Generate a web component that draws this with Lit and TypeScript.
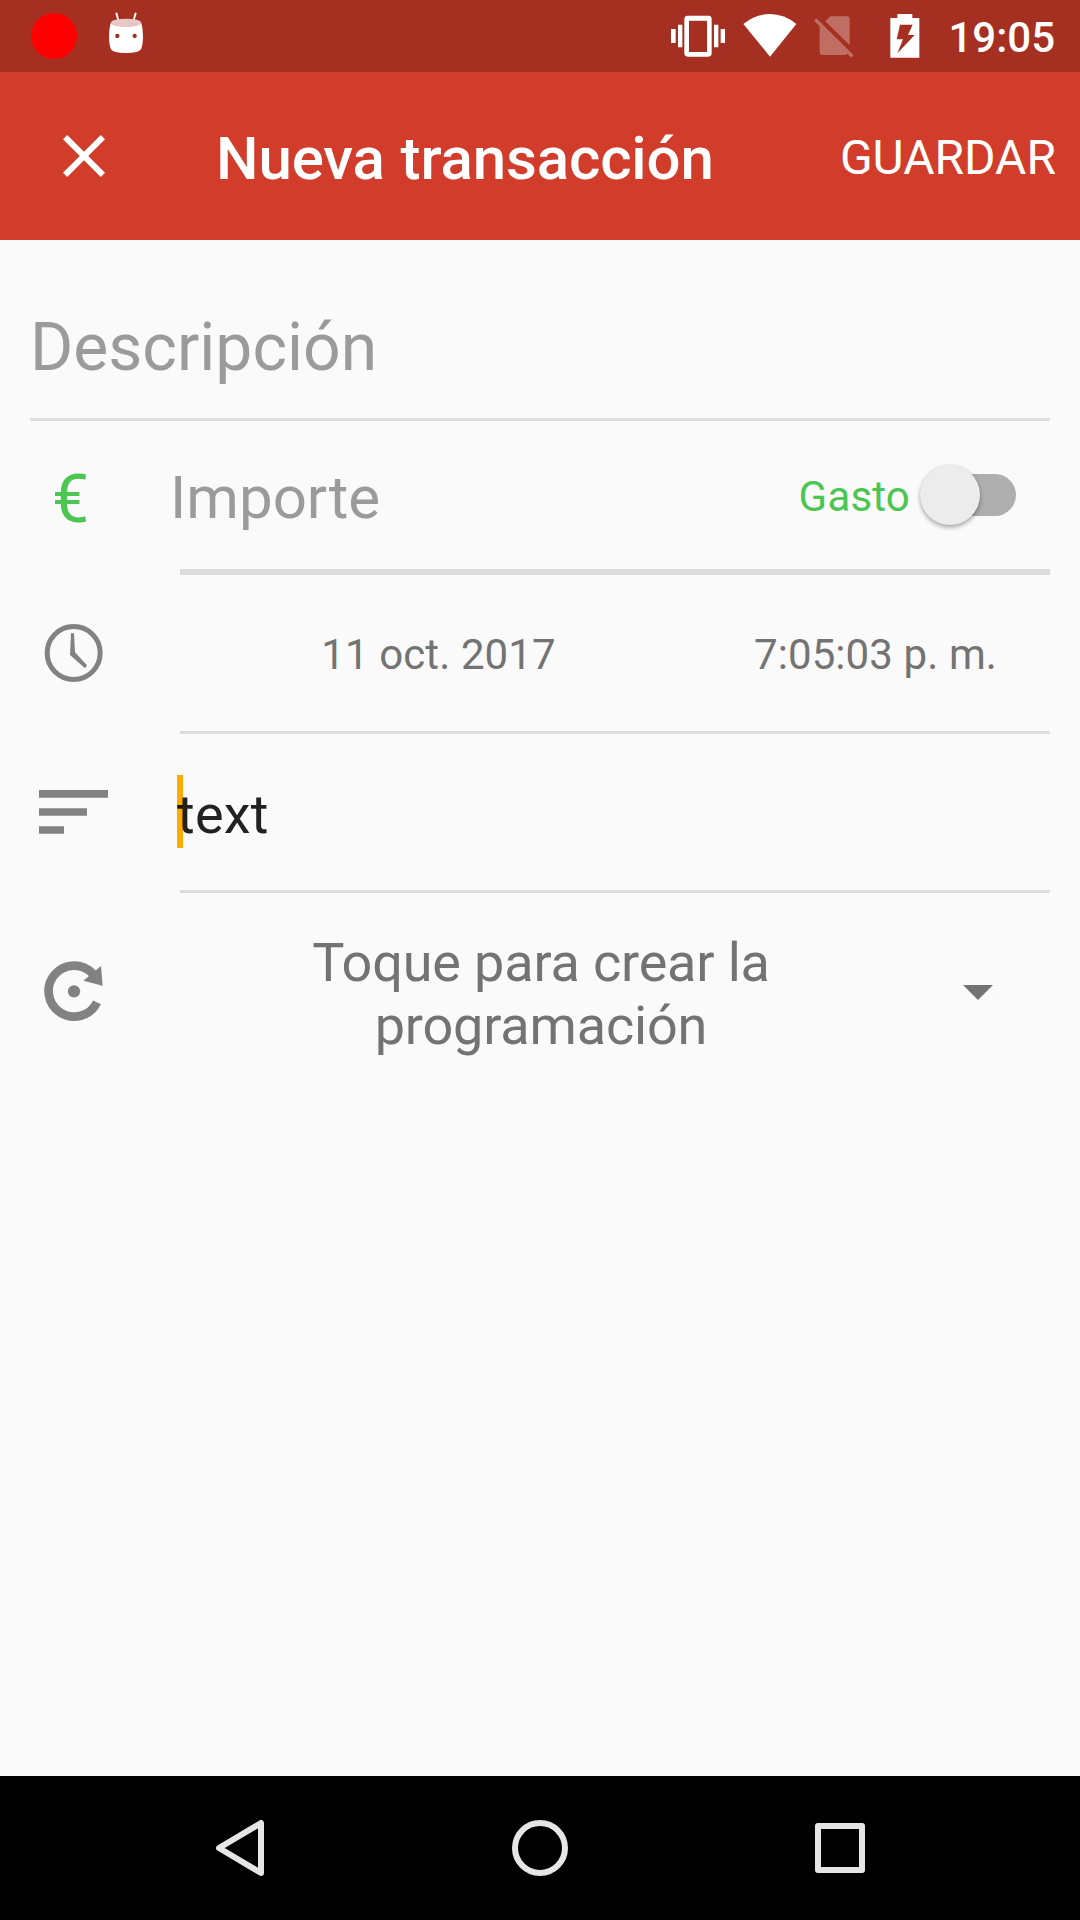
import { LitElement, html, css } from "lit";
import { customElement } from "lit/decorators.js";

@customElement("status-bar")
class StatusBar extends LitElement {
  static styles = css`
    :host { display: flex; align-items: center; box-sizing: border-box; height: 72px; padding: 0 25px 0 31px; background: #a53021; color: #fff; }
    svg { display: block; flex: none; }
    .record { width: 46px; height: 46px; border-radius: 50%; background: #f00; }
    .robot { margin-left: 31px; }
    .system { display: flex; align-items: center; margin-left: auto; }
    .wifi { margin-left: 17px; }
    .sim { margin-left: 16px; }
    .battery { margin-left: 36px; }
    .time { margin-left: 28px; padding-top: 4px; font: 500 42px/50px Roboto, sans-serif; }
  `;
  render() {
    return html`
      <div class="record"></div>
      <svg class="robot" width="36" height="72" viewBox="324 0 108 216">
        <path d="M346 40q3-5 6-1l6 23-5 2zM410 40q-3-5-6-1l-6 23 5 2z" fill="#fff" />
        <path d="M332 68Q327 88 327 108Q327 134 333 148Q338 159 378 159Q418 159 423 148Q429 134 429 108Q429 88 424 68Q418 79 378 79Q338 79 332 68Z" fill="#fff" />
        <ellipse cx="378" cy="68" rx="45" ry="12" fill="#e7c8c5" />
        <circle cx="352" cy="108" r="6.5" fill="#a53021" />
        <circle cx="404" cy="108" r="6.5" fill="#a53021" />
      </svg>
      <div class="system">
        <svg width="54" height="72" viewBox="93 0 162 216" fill="#fff">
          <path d="M93 87h14v42H93zM114 74h13v68h-13zM222 74h13v68h-13zM242 87h13v42h-13z" />
          <path fill-rule="evenodd" d="M143 47h62q10 0 10 10v103q0 10-10 10h-62q-10 0-10-10V57q0-10 10-10zM147 62v94h54V62z" />
        </svg>
        <svg class="wifi" width="56" height="72" viewBox="305 0 168 216" fill="#fff">
          <path d="M309 72Q345 42 389 42Q432 42 468 72L389 170Z" />
        </svg>
        <svg class="sim" width="40" height="72" viewBox="523 0 120 216" fill="#fff" fill-opacity=".3">
          <path d="M557 64l15-15h49q9 0 9 9v78z" />
          <path d="M523 62l7-7 112 111-7 7-12-12q-4 4-11 4h-62q-10 0-10-10V79z" />
        </svg>
        <svg class="battery" width="30" height="72" viewBox="749 0 90 216" fill="#fff">
          <path fill-rule="evenodd" d="M750 54h21V42h45v12h21v119h-87zM779 74l-10 44h19l-17 42 52-55h-20l14-31z" />
        </svg>
        <span class="time">19:05</span>
      </div>
    `;
  }
}

@customElement("app-toolbar")
class AppToolbar extends LitElement {
  static styles = css`
    :host { display: flex; align-items: center; box-sizing: border-box; height: 168px; padding: 0 24px 0 48px; background: #d13d2a; color: #fff; font-family: Roboto, sans-serif; }
    svg { display: block; }
    .title { margin: 0 0 0 96px; padding-top: 5px; font-size: 60px; line-height: 72px; font-weight: 500; letter-spacing: -.12px; word-spacing: 1px; }
    .save { margin-left: auto; padding-top: 3px; font-size: 48px; line-height: 60px; }
  `;
  render() {
    return html`
      <svg width="72" height="72" viewBox="0 0 24 24" fill="#fff">
        <path d="M19 6.41 17.59 5 12 10.59 6.41 5 5 6.41 10.59 12 5 17.59 6.41 19 12 13.41 17.59 19 19 17.59 13.41 12z" />
      </svg>
      <h1 class="title">Nueva transacción</h1>
      <span class="save">GUARDAR</span>
    `;
  }
}

@customElement("transaction-form")
class TransactionForm extends LitElement {
  static styles = css`
    :host { display: block; padding: 0 30px; font-family: Roboto, sans-serif; color: #737373; }
    svg { display: block; }
    .hint { color: #9b9b9b; }
    .description { box-sizing: border-box; height: 181px; padding-top: 68px; border-bottom: 3px solid #dcdcdc; font-size: 66px; line-height: 80px; }
    .row { display: grid; grid-template-columns: 150px 1fr; }
    .icon { display: flex; align-items: center; }
    .field { display: flex; align-items: center; height: 156px; border-bottom: 3px solid #dcdcdc; }
    .field.amount { height: 148px; border-bottom-width: 6px; }
    .euro { padding: 3px 0 0 22px; color: #4cc552; font-size: 66px; line-height: 80px; }
    .importe { margin-left: -10px; padding-top: 6px; font-size: 60px; line-height: 72px; }
    .kind { margin-left: auto; padding-top: 3px; color: #4cc552; font-size: 42px; line-height: 50px; letter-spacing: .2px; }
    .switch { display: flex; align-items: center; width: 86px; height: 42px; margin: 0 34px 0 20px; border-radius: 21px; background: #aeaeae; }
    .thumb { width: 60px; height: 60px; margin: -1px 0 0 -10px; border-radius: 50%; background: #ececec; box-shadow: 0 3px 4px rgba(0, 0, 0, .28), 0 0 3px rgba(0, 0, 0, .12); }
    .clock { padding: 0 0 4px 14px; }
    .date, .hour { padding-top: 3px; text-align: center; font-size: 42px; line-height: 50px; letter-spacing: .1px; }
    .date { width: 517px; }
    .hour { flex: 1; padding-left: 4px; }
    .lines { padding: 0 0 3px 9px; }
    .note { position: relative; margin-left: -3px; padding-top: 5px; color: rgba(0, 0, 0, .87); font-size: 54px; line-height: 64px; letter-spacing: .25px; }
    .note::before { content: ""; position: absolute; z-index: -1; left: 0; top: -3px; width: 6px; height: 73px; background: #ffab00; }
    .field.notes { position: relative; z-index: 0; }
    .repeat { padding: 0 0 4px 14px; }
    .schedule { display: flex; align-items: center; height: 199px; }
    .prompt { width: 722px; padding-top: 3px; text-align: center; font-size: 54px; line-height: 63px; letter-spacing: -.17px; }
    .arrow { margin-left: 61px; }
  `;
  render() {
    return html`
      <div class="description hint">Descripción</div>
      <div class="row">
        <div class="icon"><span class="euro">€</span></div>
        <div class="field amount">
          <span class="importe hint">Importe</span>
          <span class="kind">Gasto</span>
          <div class="switch"><div class="thumb"></div></div>
        </div>
      </div>
      <div class="row">
        <div class="icon clock">
          <svg width="60" height="60" viewBox="132 99 180 180">
            <circle cx="221" cy="189" r="79.5" fill="none" stroke="#828282" stroke-width="15" />
            <path d="M213 130h9l3 57 36 39-6 9-45-40z" fill="#828282" />
          </svg>
        </div>
        <div class="field"><span class="date">11 oct. 2017</span><span class="hour">7:05:03 p. m.</span></div>
      </div>
      <div class="row">
        <div class="icon lines">
          <svg width="70" height="46" viewBox="117 597 210 138" fill="#828282">
            <path d="M117 600h207v23H117zM117 655h144v22H117zM117 709h75v22h-75z" />
          </svg>
        </div>
        <div class="field notes"><span class="note">text</span></div>
      </div>
      <div class="row">
        <div class="icon repeat">
          <svg width="60" height="62" viewBox="132 1109 180 186">
            <path d="M291 1236A76.500 76.500 0 1 1 279 1151" fill="none" stroke="#828282" stroke-width="26" />
            <path d="M303 1127l5 59-58-15z" fill="#828282" />
            <circle cx="222" cy="1203" r="18.500" fill="#828282" />
          </svg>
        </div>
        <div class="schedule">
          <span class="prompt">Toque para crear la programación</span>
          <svg class="arrow" width="30" height="15" viewBox="0 0 30 15"><path d="M0 0h30L15 15z" fill="#737373" /></svg>
        </div>
      </div>
    `;
  }
}

@customElement("navigation-bar")
class NavigationBar extends LitElement {
  static styles = css`
    :host { display: flex; align-items: center; justify-content: center; gap: 240px; height: 144px; background: #000; }
    svg { display: block; fill: none; stroke: #e6e6e6; stroke-width: 6; stroke-linejoin: round; }
  `;
  render() {
    return html`
      <svg width="60" height="60" viewBox="210 1818 60 60"><path d="M219 1848 261 1823V1873Z" /></svg>
      <svg width="60" height="60" viewBox="510 1818 60 60"><circle cx="540" cy="1848" r="25" /></svg>
      <svg width="60" height="60" viewBox="810 1818 60 60"><path d="M818 1826h44v44h-44z" /></svg>
    `;
  }
}

@customElement("app-root")
class AppRoot extends LitElement {
  static styles = css`
    :host { display: flex; flex-direction: column; width: 1080px; height: 1920px; overflow: hidden; background: #fafafa; }
    .content { flex: 1; }
  `;
  render() {
    return html`
      <status-bar></status-bar>
      <app-toolbar></app-toolbar>
      <transaction-form class="content"></transaction-form>
      <navigation-bar></navigation-bar>
    `;
  }
}
